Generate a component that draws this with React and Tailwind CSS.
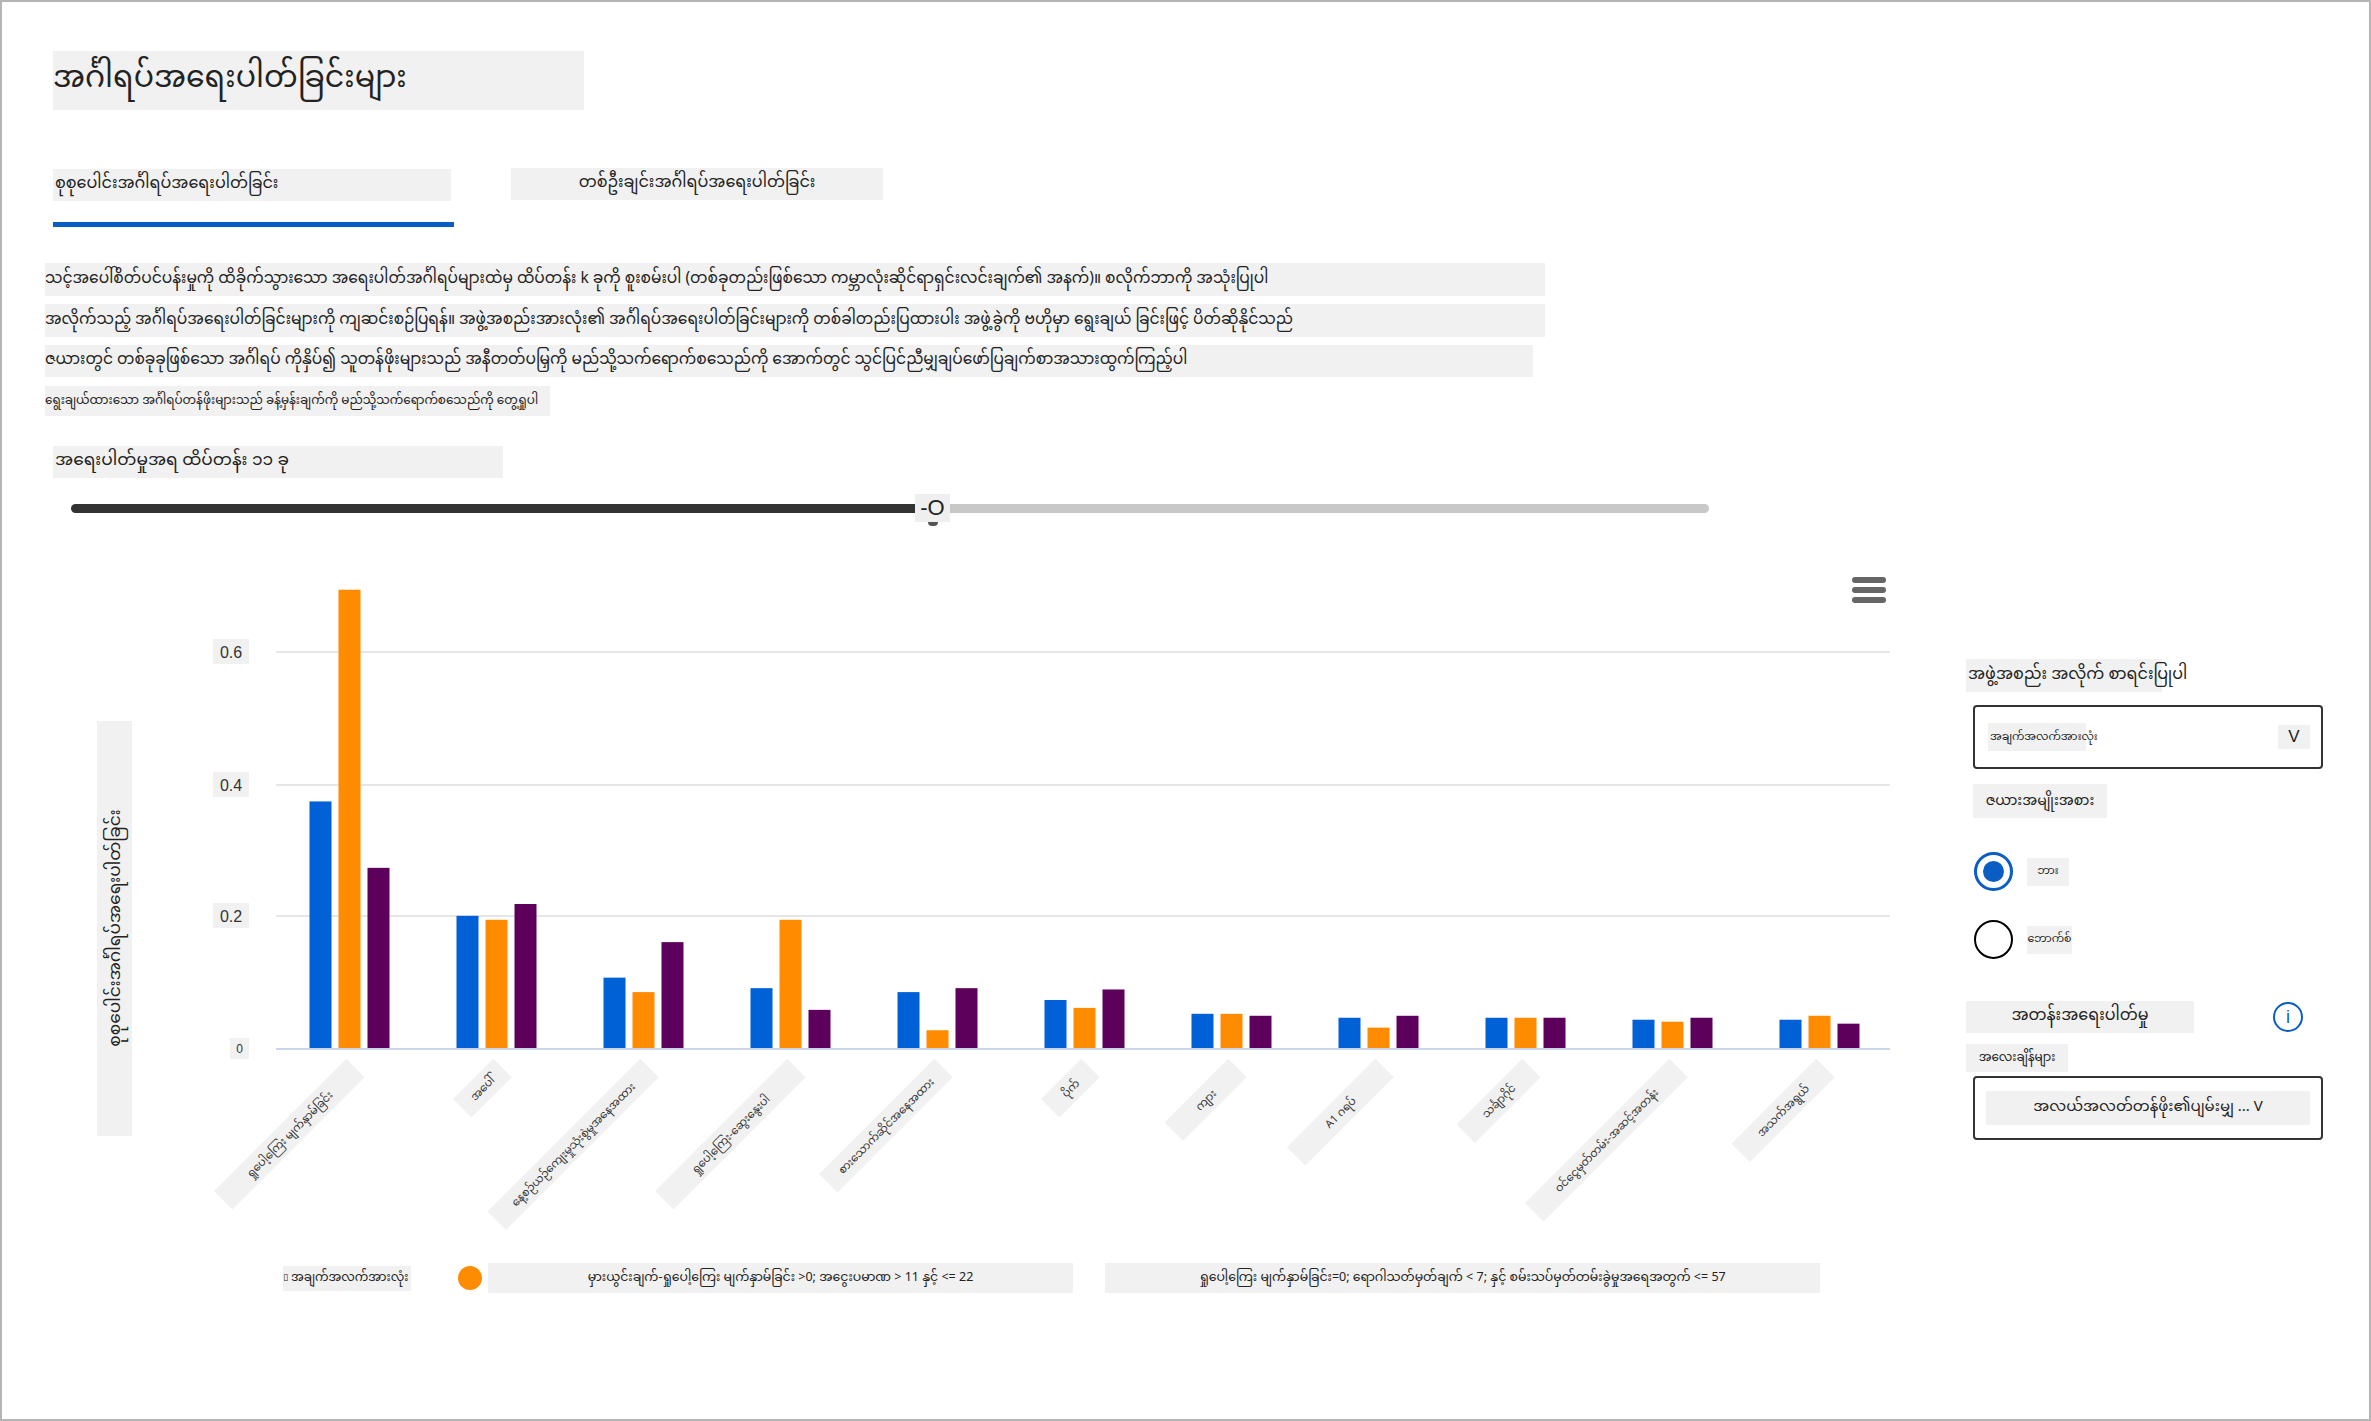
import React from 'react';

const BLUE = '#0060d6';
const ORANGE = '#ff8c00';
const PURPLE = '#5c005c';

// bar values read off the chart (all data / cohort 1 / cohort 2)
const groups = [
  { label: 'ရှုပေါ့ကြေး မျက်နှာမ်ခြင်း', len: 187, v: [0.375, 0.697, 0.274] },
  { label: 'အပေါ်', len: 57, v: [0.201, 0.195, 0.219] },
  { label: 'နေ့စဉ်ယဉ်ကျေးမှုသုံးစွဲမှုအနေအထား', len: 216, v: [0.107, 0.085, 0.161] },
  { label: 'ရှုပေါ့ကြေး-ဆွေးနွေးပါ', len: 187, v: [0.091, 0.195, 0.058] },
  { label: 'စားသောက်ဆိုင်အနေအထား', len: 163, v: [0.085, 0.027, 0.091] },
  { label: 'ပိုက်', len: 57, v: [0.073, 0.061, 0.089] },
  { label: 'ကျား', len: 90, v: [0.052, 0.052, 0.049] },
  { label: 'A1 ဂရပ်', len: 125, v: [0.046, 0.031, 0.049] },
  { label: 'သင်္ချာဂိုင်', len: 93, v: [0.046, 0.046, 0.046] },
  { label: 'ဝင်ငွေမှတ်တမ်း-အဆင့်အတန်း', len: 204, v: [0.043, 0.04, 0.046] },
  { label: 'အသက်အရွယ်', len: 120, v: [0.043, 0.049, 0.037] },
];

const BASE = 1048;
const SCALE = 657.5;
const PLOT_X = 276;
const CAT = 147;

function Chart() {
  return (
    <svg width="1900" height="680" viewBox="2 560 1900 680">
      {[652, 785, 916].map(y => (
        <line key={y} x1={PLOT_X} x2={1890} y1={y} y2={y} stroke="#e6e6e6" strokeWidth="2" />
      ))}
      {[['0.6', 652], ['0.4', 785], ['0.2', 916]].map(([t, y]) => (
        <g key={t}>
          <rect x={213} y={y - 13} width={36} height={25} fill="#f1f1f1" />
          <text x={231} y={y + 6} fontSize="16" textAnchor="middle" fill="#333" fontFamily="Liberation Sans, sans-serif">{t}</text>
        </g>
      ))}
      <rect x={230} y={1038} width={19} height={21} fill="#f1f1f1" />
      <text x={239.5} y={1053} fontSize="12" textAnchor="middle" fill="#333" fontFamily="Liberation Sans, sans-serif">0</text>

      {/* y axis title */}
      <rect x={97} y={721} width={35} height={415} fill="#f1f1f1" />
      <text
        transform="translate(120 928) rotate(-90)"
        fontSize="17"
        textAnchor="middle"
        fill="#222"
        fontFamily="Noto Sans Myanmar, Padauk, Noto Sans, sans-serif"
      >
        စုစုပေါင်းအင်္ဂါရပ်အရေးပါတ်ခြင်း
      </text>

      {groups.map((g, i) => {
        const cx = PLOT_X + CAT * (i + 0.5);
        return (
          <g key={i}>
            {g.v.map((v, j) => {
              const h = v * SCALE;
              return (
                <rect key={j} x={cx - 40 + j * 29} y={BASE - h} width={22} height={h} fill={[BLUE, ORANGE, PURPLE][j]} />
              );
            })}
            <g transform={`translate(${cx + 6} 1068) rotate(-45)`}>
              <rect x={-g.len} y={-13} width={g.len} height={26} fill="#f1f1f1" />
              <text
                x={-g.len / 2}
                y={4}
                fontSize="11"
                textAnchor="middle"
                fill="#333"
                fontFamily="Noto Sans Myanmar, Padauk, Noto Sans, sans-serif"
              >
                {g.label}
              </text>
            </g>
          </g>
        );
      })}
      <line x1={PLOT_X} x2={1890} y1={1049} y2={1049} stroke="#ccd6eb" strokeWidth="2" />
    </svg>
  );
}

function Radio({ checked, label, w }) {
  return (
    <div className="flex items-center ml-[8px]">
      {checked ? (
        <div className="w-[39px] h-[39px] rounded-full border-[3px] border-[#0a5dc2] flex items-center justify-center">
          <div className="w-[21px] h-[21px] rounded-full bg-[#0a5dc2]" />
        </div>
      ) : (
        <div className="w-[39px] h-[39px] rounded-full border-2 border-black" />
      )}
      <div className={`ml-[14px] h-[28px] bg-[#f1f1f1] flex items-center justify-center text-[11px] ${w}`}>{label}</div>
    </div>
  );
}

export default function App() {
  return (
    <div className="w-[2371px] h-[1421px] border-2 border-[#b5b5b5] bg-white text-[#222] overflow-hidden font-['Noto_Sans_Myanmar','Padauk','Noto_Sans',sans-serif]">
      <div className="pl-[51px] pt-[49px]">
        <div className="w-[531px] h-[59px] bg-[#f1f1f1] flex items-center text-[30px] whitespace-nowrap">
          အင်္ဂါရပ်အရေးပါတ်ခြင်းများ
        </div>
      </div>

      {/* tabs */}
      <div className="flex pl-[51px] mt-[59px]">
        <div className="w-[401px]">
          <div className="w-[398px] h-[32px] bg-[#f1f1f1] flex items-center text-[16px] pl-[2px] whitespace-nowrap">
            စုစုပေါင်းအင်္ဂါရပ်အရေးပါတ်ခြင်း
          </div>
          <div className="mt-[21px] h-[5px] bg-[#0a5dc2]" />
        </div>
        <div className="ml-[57px] -mt-px w-[372px] h-[32px] bg-[#f1f1f1] flex items-center justify-center text-[16px] whitespace-nowrap">
          တစ်ဦးချင်းအင်္ဂါရပ်အရေးပါတ်ခြင်း
        </div>
      </div>

      {/* description */}
      <div className="pl-[43px] mt-[36px] flex flex-col gap-[8px] text-[15.5px] whitespace-nowrap">
        <div className="w-[1500px] h-[33px] bg-[#f1f1f1] flex items-center">
          သင့်အပေါ်စိတ်ပင်ပန်းမှုကို ထိခိုက်သွားသော အရေးပါတ်အင်္ဂါရပ်များထဲမှ ထိပ်တန်း k ခုကို စူးစမ်းပါ (တစ်ခုတည်းဖြစ်သော ကမ္ဘာလုံးဆိုင်ရာရှင်းလင်းချက်၏ အနက်)။ စလိုက်ဘာကို အသုံးပြုပါ
        </div>
        <div className="w-[1500px] h-[33px] bg-[#f1f1f1] flex items-center">
          အလိုက်သည့် အင်္ဂါရပ်အရေးပါတ်ခြင်းများကို ကျဆင်းစဉ်ပြရန်။ အဖွဲ့အစည်းအားလုံး၏ အင်္ဂါရပ်အရေးပါတ်ခြင်းများကို တစ်ခါတည်းပြထားပါး အဖွဲ့ခွဲကို ဗဟိုမှာ ရွေးချယ် ခြင်းဖြင့်  ပိတ်ဆိုနိုင်သည်
        </div>
        <div className="w-[1488px] h-[32px] bg-[#f1f1f1] flex items-center">
          ဇယားတွင် တစ်ခုခုဖြစ်သော အင်္ဂါရပ် ကိုနှိပ်၍ သူတန်ဖိုးများသည် အနီတတ်ပမြှကို မည်သို့သက်ရောက်စသေည်ကို အောက်တွင် သွင်ပြင်ညီမျှချပ်ဖော်ပြချက်စာအသားထွက်ကြည့်ပါ
        </div>
        <div className="w-[505px] h-[30px] mt-px bg-[#f1f1f1] flex items-center text-[12px]">
          ရွေးချယ်ထားသော အင်္ဂါရပ်တန်ဖိုးများသည် ခန့်မှန်းချက်ကို မည်သို့သက်ရောက်စသေည်ကို တွေ့ရှုပါ
        </div>
      </div>

      {/* slider */}
      <div className="pl-[51px] mt-[30px]">
        <div className="w-[450px] h-[32px] bg-[#f1f1f1] flex items-center pl-[2px] text-[17px] whitespace-nowrap">
          အရေးပါတ်မှုအရ ထိပ်တန်း ၁၁ ခု
        </div>
      </div>
      <div className="flex items-center ml-[69px] mt-[16px]">
        <div className="w-[844px] h-[9px] rounded-l-full bg-[#333]" />
        <div className="relative w-[35px] h-[28px] bg-[#efefef] flex items-center justify-center text-[22px] leading-none text-[#222] font-['Liberation_Sans',sans-serif]">
          -O
          <div className="absolute left-[13px] -bottom-[4px] w-[10px] h-[4px] rounded-b-full bg-[#555]" />
        </div>
        <div className="w-[759px] h-[9px] rounded-r-full bg-[#c8c8c8]" />
      </div>

      {/* chart + controls */}
      <div className="flex mt-[38px]">
        <div className="relative w-[1964px] shrink-0">
          <Chart />
          <div className="absolute left-[1850px] top-[17px] w-[34px] flex flex-col gap-[4px]">
            <div className="h-[6px] rounded-full bg-[#666]" />
            <div className="h-[6px] rounded-full bg-[#666]" />
            <div className="h-[6px] rounded-full bg-[#666]" />
          </div>
          <div className="flex items-center pl-[281px] mt-[23px] whitespace-nowrap">
            <div className="w-[128px] h-[25px] bg-[#f1f1f1] flex items-center text-[12px]">
              <span className="text-[9px] mr-[3px] font-['DejaVu_Sans',sans-serif]">▯</span>အချက်အလက်အားလုံး
            </div>
            <div className="ml-[47px] w-[24px] h-[24px] rounded-full bg-[#ff8c00]" />
            <div className="ml-[6px] w-[585px] h-[30px] bg-[#f1f1f1] flex items-center justify-center text-[12.5px]">
              မှားယွင်းချက်-ရှုပေါ့ကြေး မျက်နှာမ်ခြင်း &gt;0; အငွေးပမာဏ &gt; 11 နှင့် &lt;= 22
            </div>
            <div className="ml-[32px] w-[715px] h-[30px] bg-[#f1f1f1] flex items-center justify-center text-[12.5px]">
              ရှုပေါ့ကြေး မျက်နှာမ်ခြင်း=0; ရောဂါသတ်မှတ်ချက် &lt; 7; နှင့် စမ်းသပ်မှတ်တမ်းခွဲမှုအရေအတွက် &lt;= 57
            </div>
          </div>
        </div>

        <div className="w-[360px] pt-[99px] flex flex-col whitespace-nowrap">
          <div className="w-[196px] h-[33px] bg-[#f1f1f1] flex items-center pl-[2px] text-[16px]">
            အဖွဲ့အစည်း အလိုက် စာရင်းပြုပါ
          </div>
          <div className="ml-[7px] mt-[13px] w-[350px] h-[64px] border-2 border-[#333] rounded-[4px] flex items-center justify-between pl-[13px] pr-[11px]">
            <div className="h-[28px] w-[98px] bg-[#f1f1f1] flex items-center text-[11px] pl-[2px]">အချက်အလက်အားလုံး</div>
            <div className="w-[32px] h-[24px] bg-[#f1f1f1] flex items-center justify-center text-[17px] font-['Liberation_Sans',sans-serif]">V</div>
          </div>
          <div className="ml-[7px] mt-[15px] w-[134px] h-[34px] bg-[#f1f1f1] flex items-center justify-center text-[14px]">
            ဇယားအမျိုးအစား
          </div>
          <div className="mt-[34px]">
            <Radio checked label="ဘား" w="w-[42px]" />
          </div>
          <div className="mt-[29px]">
            <Radio label="ဘောက်စ်" w="w-[45px]" />
          </div>
          <div className="mt-[42px] flex items-center">
            <div className="w-[228px] h-[32px] bg-[#f1f1f1] flex items-center justify-center text-[16px]">
              အတန်းအရေးပါတ်မှု
            </div>
            <div className="ml-[79px] w-[30px] h-[30px] rounded-full border-2 border-[#0a5dc2] text-[#0a5dc2] flex items-center justify-center text-[18px] font-['Liberation_Sans',sans-serif]">
              i
            </div>
          </div>
          <div className="mt-[11px] w-[102px] h-[28px] bg-[#f1f1f1] flex items-center justify-center text-[12px]">
            အလေးချိန်များ
          </div>
          <div className="ml-[7px] mt-[4px] w-[350px] h-[64px] border-2 border-[#333] rounded-[4px] flex items-center justify-center">
            <div className="w-[324px] h-[34px] bg-[#f1f1f1] flex items-center justify-center text-[15px]">
              အလယ်အလတ်တန်ဖိုး၏ပျမ်းမျှ ... V
            </div>
          </div>
        </div>
      </div>
    </div>
  );
}
